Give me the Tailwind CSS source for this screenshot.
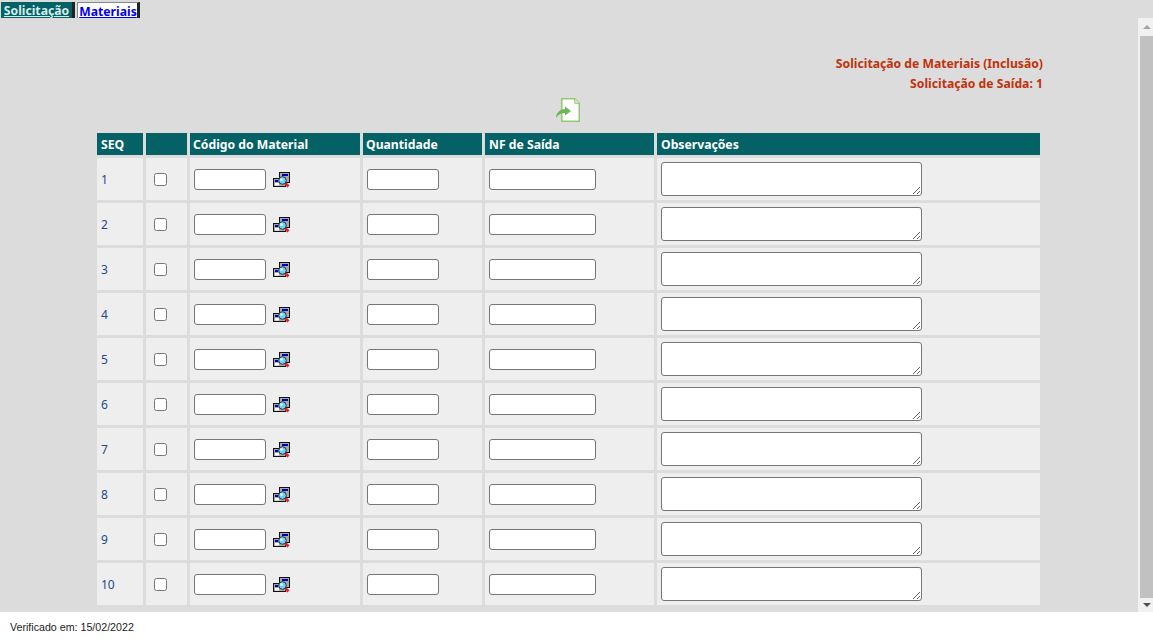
<!DOCTYPE html>
<html lang="pt-BR">
<head>
    <meta charset="UTF-8">
    <title>Solicitação de Materiais</title>
    <script src="https://cdn.jsdelivr.net/npm/@tailwindcss/browser@4"></script>
</head>
<body class="bg-white h-screen overflow-hidden font-['Noto_Sans',sans-serif]">
    <svg class="hidden">
        <symbol id="lookup" viewBox="0 0 17 17">
            <rect x="6.500" y="1.500" width="10" height="10" fill="#a8a8a8" stroke="#111"/>
            <rect x="9" y="3" width="6" height="2" fill="#0000b0"/>
            <rect x="0.500" y="7.500" width="12" height="8" fill="#a8a8a8" stroke="#111"/>
            <rect x="2" y="9" width="3" height="2" fill="#0000b0"/>
            <rect x="2" y="12" width="4" height="2.500" fill="#fff"/>
            <circle cx="9.500" cy="9.500" r="3.800" fill="#6fd0f0" stroke="#17384f"/>
            <circle cx="8.500" cy="8.500" r="1.300" fill="#f2fdff"/>
            <path d="M12.500 12.500l3 3" stroke="#e8202a" stroke-width="3"/>
        </symbol>
    </svg>

    <div class="h-[612px] bg-[#dcdcdc] flex flex-col">
        <!-- abas -->
        <div class="h-[18px] flex items-end text-[12.2px] leading-[17px] font-bold">
            <a href="#" class="ml-px w-[74px] h-4 bg-[#046266] text-[#d8ecec] underline text-center border-r-[3px] border-[#222] whitespace-nowrap">Solicitação</a>
            <a href="#" class="ml-[2px] w-[63px] h-4 pl-px bg-white text-[#0000ee] underline text-center border-t border-l border-[#888] border-r-[3px] border-r-[#222] whitespace-nowrap">Materiais</a>
        </div>

        <div class="flex-1 flex min-h-0">
            <div class="flex-1 min-w-0">
                <div class="h-[112px] pt-[36px] pr-[95px] text-right text-[12.2px] font-bold leading-[20px] text-[#c0320a]">
                    <p>Solicitação de Materiais (Inclusão)</p>
                    <p>Solicitação de Saída: 1</p>
                    <div class="flex justify-start pl-[561px] pt-[4px]">
                        <svg width="19" height="24" viewBox="0 0 19 24" class="overflow-visible">
                            <path d="M.75 .75h13l4.500 4.500v18h-17.500z" fill="#fff" stroke="#8fca6e" stroke-width="1.500"/>
                            <path d="M13.750 .75v4.500h4.500" fill="#d9efca" stroke="#8fca6e"/>
                            <path d="M-5 20C-5 15-1 11 4 11V8.500L10 13 4 17.500V15C0 15-3 16.500-5 20z" fill="#6bb755"/>
                        </svg>
                    </div>
                </div>

                <table class="ml-[94px] border-separate border-spacing-[3px] table-fixed w-[949px] text-[12.2px]">
                    <thead>
                        <tr class="h-[22px] bg-[#046266] text-white text-left">
                            <th class="w-[46px] pl-1 pt-[2px] font-bold">SEQ</th>
                            <th class="w-[41px]"></th>
                            <th class="w-[170px] pl-[3px] pt-[2px] font-bold">Código do Material</th>
                            <th class="w-[119px] pl-[3px] pt-[2px] font-bold">Quantidade</th>
                            <th class="w-[169px] pl-1 pt-[2px] font-bold">NF de Saída</th>
                            <th class="pl-1 pt-[2px] font-bold">Observações</th>
                        </tr>
                    </thead>
                    <tbody class="text-[#1c4a8c] text-[12px]">
                        <tr class="h-[42px] bg-[#eeeeee]"><td class="pl-1 pt-[2px]">1</td><td class="pl-[8px]"><input type="checkbox" class="block"></td><td class="pl-1"><div class="flex items-center gap-[7px]"><input type="text" class="w-[72px] h-[21px] bg-white border border-[#767676] rounded-[3px]"><svg width="17" height="17" class="mt-px"><use href="#lookup"/></svg></div></td><td class="pl-1"><input type="text" class="block w-[72px] h-[21px] bg-white border border-[#767676] rounded-[3px]"></td><td class="pl-1"><input type="text" class="block w-[107px] h-[21px] bg-white border border-[#767676] rounded-[3px]"></td><td class="pl-1"><textarea class="block w-[261px] h-[34px] bg-white border border-[#767676] rounded-[3px]"></textarea></td></tr>
                        <tr class="h-[42px] bg-[#eeeeee]"><td class="pl-1 pt-[2px]">2</td><td class="pl-[8px]"><input type="checkbox" class="block"></td><td class="pl-1"><div class="flex items-center gap-[7px]"><input type="text" class="w-[72px] h-[21px] bg-white border border-[#767676] rounded-[3px]"><svg width="17" height="17" class="mt-px"><use href="#lookup"/></svg></div></td><td class="pl-1"><input type="text" class="block w-[72px] h-[21px] bg-white border border-[#767676] rounded-[3px]"></td><td class="pl-1"><input type="text" class="block w-[107px] h-[21px] bg-white border border-[#767676] rounded-[3px]"></td><td class="pl-1"><textarea class="block w-[261px] h-[34px] bg-white border border-[#767676] rounded-[3px]"></textarea></td></tr>
                        <tr class="h-[42px] bg-[#eeeeee]"><td class="pl-1 pt-[2px]">3</td><td class="pl-[8px]"><input type="checkbox" class="block"></td><td class="pl-1"><div class="flex items-center gap-[7px]"><input type="text" class="w-[72px] h-[21px] bg-white border border-[#767676] rounded-[3px]"><svg width="17" height="17" class="mt-px"><use href="#lookup"/></svg></div></td><td class="pl-1"><input type="text" class="block w-[72px] h-[21px] bg-white border border-[#767676] rounded-[3px]"></td><td class="pl-1"><input type="text" class="block w-[107px] h-[21px] bg-white border border-[#767676] rounded-[3px]"></td><td class="pl-1"><textarea class="block w-[261px] h-[34px] bg-white border border-[#767676] rounded-[3px]"></textarea></td></tr>
                        <tr class="h-[42px] bg-[#eeeeee]"><td class="pl-1 pt-[2px]">4</td><td class="pl-[8px]"><input type="checkbox" class="block"></td><td class="pl-1"><div class="flex items-center gap-[7px]"><input type="text" class="w-[72px] h-[21px] bg-white border border-[#767676] rounded-[3px]"><svg width="17" height="17" class="mt-px"><use href="#lookup"/></svg></div></td><td class="pl-1"><input type="text" class="block w-[72px] h-[21px] bg-white border border-[#767676] rounded-[3px]"></td><td class="pl-1"><input type="text" class="block w-[107px] h-[21px] bg-white border border-[#767676] rounded-[3px]"></td><td class="pl-1"><textarea class="block w-[261px] h-[34px] bg-white border border-[#767676] rounded-[3px]"></textarea></td></tr>
                        <tr class="h-[42px] bg-[#eeeeee]"><td class="pl-1 pt-[2px]">5</td><td class="pl-[8px]"><input type="checkbox" class="block"></td><td class="pl-1"><div class="flex items-center gap-[7px]"><input type="text" class="w-[72px] h-[21px] bg-white border border-[#767676] rounded-[3px]"><svg width="17" height="17" class="mt-px"><use href="#lookup"/></svg></div></td><td class="pl-1"><input type="text" class="block w-[72px] h-[21px] bg-white border border-[#767676] rounded-[3px]"></td><td class="pl-1"><input type="text" class="block w-[107px] h-[21px] bg-white border border-[#767676] rounded-[3px]"></td><td class="pl-1"><textarea class="block w-[261px] h-[34px] bg-white border border-[#767676] rounded-[3px]"></textarea></td></tr>
                        <tr class="h-[42px] bg-[#eeeeee]"><td class="pl-1 pt-[2px]">6</td><td class="pl-[8px]"><input type="checkbox" class="block"></td><td class="pl-1"><div class="flex items-center gap-[7px]"><input type="text" class="w-[72px] h-[21px] bg-white border border-[#767676] rounded-[3px]"><svg width="17" height="17" class="mt-px"><use href="#lookup"/></svg></div></td><td class="pl-1"><input type="text" class="block w-[72px] h-[21px] bg-white border border-[#767676] rounded-[3px]"></td><td class="pl-1"><input type="text" class="block w-[107px] h-[21px] bg-white border border-[#767676] rounded-[3px]"></td><td class="pl-1"><textarea class="block w-[261px] h-[34px] bg-white border border-[#767676] rounded-[3px]"></textarea></td></tr>
                        <tr class="h-[42px] bg-[#eeeeee]"><td class="pl-1 pt-[2px]">7</td><td class="pl-[8px]"><input type="checkbox" class="block"></td><td class="pl-1"><div class="flex items-center gap-[7px]"><input type="text" class="w-[72px] h-[21px] bg-white border border-[#767676] rounded-[3px]"><svg width="17" height="17" class="mt-px"><use href="#lookup"/></svg></div></td><td class="pl-1"><input type="text" class="block w-[72px] h-[21px] bg-white border border-[#767676] rounded-[3px]"></td><td class="pl-1"><input type="text" class="block w-[107px] h-[21px] bg-white border border-[#767676] rounded-[3px]"></td><td class="pl-1"><textarea class="block w-[261px] h-[34px] bg-white border border-[#767676] rounded-[3px]"></textarea></td></tr>
                        <tr class="h-[42px] bg-[#eeeeee]"><td class="pl-1 pt-[2px]">8</td><td class="pl-[8px]"><input type="checkbox" class="block"></td><td class="pl-1"><div class="flex items-center gap-[7px]"><input type="text" class="w-[72px] h-[21px] bg-white border border-[#767676] rounded-[3px]"><svg width="17" height="17" class="mt-px"><use href="#lookup"/></svg></div></td><td class="pl-1"><input type="text" class="block w-[72px] h-[21px] bg-white border border-[#767676] rounded-[3px]"></td><td class="pl-1"><input type="text" class="block w-[107px] h-[21px] bg-white border border-[#767676] rounded-[3px]"></td><td class="pl-1"><textarea class="block w-[261px] h-[34px] bg-white border border-[#767676] rounded-[3px]"></textarea></td></tr>
                        <tr class="h-[42px] bg-[#eeeeee]"><td class="pl-1 pt-[2px]">9</td><td class="pl-[8px]"><input type="checkbox" class="block"></td><td class="pl-1"><div class="flex items-center gap-[7px]"><input type="text" class="w-[72px] h-[21px] bg-white border border-[#767676] rounded-[3px]"><svg width="17" height="17" class="mt-px"><use href="#lookup"/></svg></div></td><td class="pl-1"><input type="text" class="block w-[72px] h-[21px] bg-white border border-[#767676] rounded-[3px]"></td><td class="pl-1"><input type="text" class="block w-[107px] h-[21px] bg-white border border-[#767676] rounded-[3px]"></td><td class="pl-1"><textarea class="block w-[261px] h-[34px] bg-white border border-[#767676] rounded-[3px]"></textarea></td></tr>
                        <tr class="h-[42px] bg-[#eeeeee]"><td class="pl-1 pt-[2px]">10</td><td class="pl-[8px]"><input type="checkbox" class="block"></td><td class="pl-1"><div class="flex items-center gap-[7px]"><input type="text" class="w-[72px] h-[21px] bg-white border border-[#767676] rounded-[3px]"><svg width="17" height="17" class="mt-px"><use href="#lookup"/></svg></div></td><td class="pl-1"><input type="text" class="block w-[72px] h-[21px] bg-white border border-[#767676] rounded-[3px]"></td><td class="pl-1"><input type="text" class="block w-[107px] h-[21px] bg-white border border-[#767676] rounded-[3px]"></td><td class="pl-1"><textarea class="block w-[261px] h-[34px] bg-white border border-[#767676] rounded-[3px]"></textarea></td></tr>
                    </tbody>
                </table>
            </div>

            <!-- barra de rolagem -->
            <div class="w-[15px] bg-[#f1f1f1] flex flex-col">
                <div class="h-[18px] flex items-center justify-center pl-[2px]">
                    <div class="w-0 h-0 border-x-[4px] border-x-transparent border-b-[4px] border-b-[#a3a3a3]"></div>
                </div>
                <div class="flex-1 ml-[2px] bg-[#c1c1c1]"></div>
                <div class="h-[14px] flex items-center justify-center pl-[2px]">
                    <div class="w-0 h-0 border-x-[4px] border-x-transparent border-t-[4px] border-t-[#505050]"></div>
                </div>
            </div>
        </div>
    </div>

    <footer class="h-[30px] pl-[10px] pt-[9px] text-[10.67px] leading-[12px] text-[#222] font-['Liberation_Sans',sans-serif]">Verificado em: 15/02/2022</footer>
</body>
</html>
